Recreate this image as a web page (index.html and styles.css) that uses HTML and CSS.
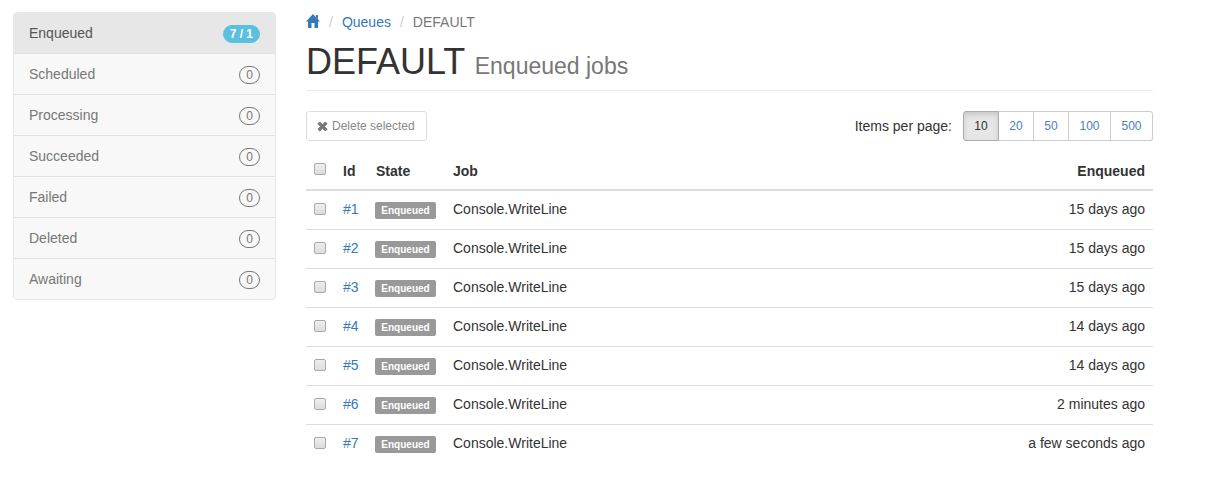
FILE: index.html
```html
<!DOCTYPE html>
<html lang="en">
<head>
  <meta charset="UTF-8">
  <meta name="viewport" content="width=device-width, initial-scale=1">
  <title>DEFAULT - Enqueued jobs</title>
  <link rel="stylesheet" href="styles.css">
</head>
<body>
  <div class="container">
    <nav class="sidebar">
      <a href="#" class="active">Enqueued <span class="badge badge-info">7 / 1</span></a>
      <a href="#">Scheduled <span class="badge">0</span></a>
      <a href="#">Processing <span class="badge">0</span></a>
      <a href="#">Succeeded <span class="badge">0</span></a>
      <a href="#">Failed <span class="badge">0</span></a>
      <a href="#">Deleted <span class="badge">0</span></a>
      <a href="#">Awaiting <span class="badge">0</span></a>
    </nav>

    <main class="content">
      <ol class="breadcrumb">
        <li>
          <a href="#" aria-label="Home">
            <svg class="icon-home" viewBox="0 0 14 14"><path d="M7 0 L14 7.4 H12 V14 H8.5 V9 H5.5 V14 H2 V7.4 H0 Z M10 1 H12 V5 L10 3 Z" fill="currentColor"/></svg>
          </a>
        </li>
        <li><a href="#">Queues</a></li>
        <li>DEFAULT</li>
      </ol>

      <h1 class="page-header">DEFAULT <small>Enqueued jobs</small></h1>

      <div class="toolbar">
        <button type="button" class="btn-delete" disabled>
          <svg class="icon-remove" viewBox="0 0 12 12"><path d="M3 1 L6 4 L9 1 L11 3 L8 6 L11 9 L9 11 L6 8 L3 11 L1 9 L4 6 L1 3 Z" fill="currentColor" stroke="currentColor" stroke-width="1" stroke-linejoin="round"/></svg>
          Delete selected
        </button>
        <div class="per-page">
          <span>Items per page:</span>
          <div class="btn-group">
            <a href="#" class="active">10</a>
            <a href="#">20</a>
            <a href="#">50</a>
            <a href="#" class="wide">100</a>
            <a href="#" class="wide">500</a>
          </div>
        </div>
      </div>

      <table class="jobs">
        <thead>
          <tr>
            <th class="col-check"><input type="checkbox" aria-label="Select all jobs"></th>
            <th class="col-id">Id</th>
            <th class="col-state">State</th>
            <th>Job</th>
            <th class="col-date">Enqueued</th>
          </tr>
        </thead>
        <tbody>
          <tr>
            <td><input type="checkbox" aria-label="Select job #1"></td>
            <td><a href="#">#1</a></td>
            <td><span class="label">Enqueued</span></td>
            <td>Console.WriteLine</td>
            <td class="col-date">15 days ago</td>
          </tr>
          <tr>
            <td><input type="checkbox" aria-label="Select job #2"></td>
            <td><a href="#">#2</a></td>
            <td><span class="label">Enqueued</span></td>
            <td>Console.WriteLine</td>
            <td class="col-date">15 days ago</td>
          </tr>
          <tr>
            <td><input type="checkbox" aria-label="Select job #3"></td>
            <td><a href="#">#3</a></td>
            <td><span class="label">Enqueued</span></td>
            <td>Console.WriteLine</td>
            <td class="col-date">15 days ago</td>
          </tr>
          <tr>
            <td><input type="checkbox" aria-label="Select job #4"></td>
            <td><a href="#">#4</a></td>
            <td><span class="label">Enqueued</span></td>
            <td>Console.WriteLine</td>
            <td class="col-date">14 days ago</td>
          </tr>
          <tr>
            <td><input type="checkbox" aria-label="Select job #5"></td>
            <td><a href="#">#5</a></td>
            <td><span class="label">Enqueued</span></td>
            <td>Console.WriteLine</td>
            <td class="col-date">14 days ago</td>
          </tr>
          <tr>
            <td><input type="checkbox" aria-label="Select job #6"></td>
            <td><a href="#">#6</a></td>
            <td><span class="label">Enqueued</span></td>
            <td>Console.WriteLine</td>
            <td class="col-date">2 minutes ago</td>
          </tr>
          <tr>
            <td><input type="checkbox" aria-label="Select job #7"></td>
            <td><a href="#">#7</a></td>
            <td><span class="label">Enqueued</span></td>
            <td>Console.WriteLine</td>
            <td class="col-date">a few seconds ago</td>
          </tr>
        </tbody>
      </table>
    </main>
  </div>
</body>
</html>
```
FILE: styles.css
```css
* { box-sizing: border-box; }
body {
  margin: 0;
  font-family: "Liberation Sans", Arial, sans-serif;
  font-size: 14px;
  line-height: 20px;
  color: #333;
  background-color: #fff;
}
a {
  color: #337ab7;
  text-decoration: none;
}
.container {
  display: flex;
  align-items: flex-start;
  gap: 30px;
  max-width: 1153px;
  padding: 12px 0 12px 13px;
}

/* sidebar */
.sidebar {
  flex: 0 0 263px;
  border: 1px solid #e7e7e7;
  border-radius: 4px;
  overflow: hidden;
}
.sidebar a {
  display: flex;
  justify-content: space-between;
  align-items: center;
  padding: 10px 15px;
  color: #777;
  background-color: #f8f8f8;
}
.sidebar a + a { border-top: 1px solid #e1e1e1; }
.sidebar a.active {
  color: #555;
  background-color: #e7e7e7;
}
.badge {
  margin-top: 2px;
  padding: 2px 6px;
  border: 1px solid #777;
  border-radius: 10px;
  font-size: 12px;
  line-height: 12px;
}
.badge-info {
  border-color: #5bc0de;
  background-color: #5bc0de;
  color: #fff;
  font-weight: bold;
}

/* heading */
.content {
  flex: 1;
  min-width: 0;
}
.breadcrumb {
  display: flex;
  margin: 0 0 10px;
  padding: 0;
  list-style: none;
  color: #777;
}
.breadcrumb li + li::before {
  content: "/";
  padding: 0 9px;
  color: #ccc;
}
.icon-home {
  display: block;
  width: 14px;
  height: 14px;
  margin-top: 2px;
}
.page-header {
  margin: 0 0 20px;
  padding-bottom: 8px;
  border-bottom: 1px solid #eee;
  font-size: 36px;
  font-weight: normal;
  line-height: 40px;
}
.page-header small {
  font-size: 23px;
  line-height: 1;
  color: #777;
}

/* toolbar */
.toolbar {
  display: flex;
  justify-content: space-between;
  margin-bottom: 12px;
}
.btn-delete {
  display: flex;
  align-items: center;
  gap: 4px;
  height: 30px;
  padding: 0 11px 0 10px;
  border: 1px solid #ddd;
  border-radius: 3px;
  background-color: #fff;
  color: #888;
  font-family: inherit;
  font-size: 12px;
}
.icon-remove {
  width: 11px;
  height: 11px;
  color: #777;
}
.per-page {
  display: flex;
  align-items: center;
  gap: 11px;
}
.btn-group { display: flex; }
.btn-group a {
  width: 35px;
  padding: 5px 0;
  border: 1px solid #ccc;
  border-left-width: 0;
  font-size: 12px;
  line-height: 18px;
  text-align: center;
  color: #4a80c0;
}
.btn-group a.wide { width: 42px; }
.btn-group a.active {
  width: 36px;
  border: 1px solid #adadad;
  border-radius: 3px 0 0 3px;
  background-color: #e6e6e6;
  box-shadow: inset 0 3px 5px rgba(0,0,0,0.125);
  color: #333;
}
.btn-group a:last-child { border-radius: 0 3px 3px 0; }

/* jobs table */
.jobs {
  width: 100%;
  border-spacing: 0;
}
.jobs th, .jobs td {
  padding: 8px;
  text-align: left;
  vertical-align: top;
}
.jobs th { border-bottom: 2px solid #ddd; }
.jobs td {
  padding-bottom: 10px;
  border-bottom: 1px solid #ddd;
}
.jobs tr:last-child td { border-bottom: none; }
.jobs .col-check { width: 29px; }
.jobs .col-id { width: 33px; }
.jobs .col-state { width: 77px; }
.jobs .col-date { text-align: right; }
.jobs input {
  appearance: none;
  display: block;
  width: 12px;
  height: 12px;
  margin: 4px 0 0;
  border: 1px solid #aaa;
  border-radius: 2px;
  background: linear-gradient(#eee, #ddd);
}
.jobs th input { margin-top: 2px; }
.jobs input:checked { background: #337ab7; }
.label {
  display: block;
  width: 61px;
  margin: 3px 0 0 -1px;
  border-radius: 2px;
  background-color: #999;
  color: #fff;
  font-size: 10px;
  font-weight: bold;
  line-height: 17px;
  text-align: center;
}
```
